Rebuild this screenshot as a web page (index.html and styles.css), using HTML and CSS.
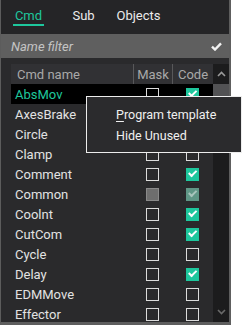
FILE: index.html
```html
<!DOCTYPE html>
<html lang="en">
<head>
    <meta charset="UTF-8">
    <title>Commands</title>
    <link rel="stylesheet" href="styles.css">
</head>
<body>

<div class="panel">
    <div class="tabs">
        <div class="tab active"><span>Cmd</span></div>
        <div class="tab"><span>Sub</span></div>
        <div class="tab"><span>Objects</span></div>
    </div>

    <div class="filter">
        <span class="filter-text">Name filter</span>
        <svg class="filter-check" width="11" height="9" viewBox="0 0 11 9">
            <path d="M1 4.6 L4 7.5 L10 1.3" fill="none" stroke="#f2f2f2" stroke-width="2.4"/>
        </svg>
    </div>

    <div class="table-wrap">
        <div class="table">
            <div class="row head">
                <div class="col-name">Cmd name</div>
                <div class="col-mask">Mask</div>
                <div class="col-code">Code</div>
            </div>
            <div class="row selected">
                <div class="col-name">AbsMov</div>
                <div class="col-mask"><span class="box"></span></div>
                <div class="col-code"><span class="box on"></span></div>
            </div>
            <div class="row">
                <div class="col-name">AxesBrake</div>
                <div class="col-mask"><span class="box"></span></div>
                <div class="col-code"><span class="box"></span></div>
            </div>
            <div class="row">
                <div class="col-name">Circle</div>
                <div class="col-mask"><span class="box"></span></div>
                <div class="col-code"><span class="box"></span></div>
            </div>
            <div class="row">
                <div class="col-name">Clamp</div>
                <div class="col-mask"><span class="box"></span></div>
                <div class="col-code"><span class="box"></span></div>
            </div>
            <div class="row">
                <div class="col-name">Comment</div>
                <div class="col-mask"><span class="box"></span></div>
                <div class="col-code"><span class="box on"></span></div>
            </div>
            <div class="row">
                <div class="col-name">Common</div>
                <div class="col-mask"><span class="box disabled"></span></div>
                <div class="col-code"><span class="box on disabled"></span></div>
            </div>
            <div class="row">
                <div class="col-name">Coolnt</div>
                <div class="col-mask"><span class="box"></span></div>
                <div class="col-code"><span class="box on"></span></div>
            </div>
            <div class="row">
                <div class="col-name">CutCom</div>
                <div class="col-mask"><span class="box"></span></div>
                <div class="col-code"><span class="box on"></span></div>
            </div>
            <div class="row">
                <div class="col-name">Cycle</div>
                <div class="col-mask"><span class="box"></span></div>
                <div class="col-code"><span class="box"></span></div>
            </div>
            <div class="row">
                <div class="col-name">Delay</div>
                <div class="col-mask"><span class="box"></span></div>
                <div class="col-code"><span class="box on"></span></div>
            </div>
            <div class="row">
                <div class="col-name">EDMMove</div>
                <div class="col-mask"><span class="box"></span></div>
                <div class="col-code"><span class="box"></span></div>
            </div>
            <div class="row">
                <div class="col-name">Effector</div>
                <div class="col-mask"><span class="box"></span></div>
                <div class="col-code"><span class="box"></span></div>
            </div>
        </div>

        <div class="scrollbar">
            <div class="scroll-btn">
                <svg width="9" height="6" viewBox="0 0 9 6"><path d="M1 5 L4.5 1.5 L8 5" fill="none" stroke="#9a9a9a" stroke-width="1.6"/></svg>
            </div>
            <div class="scroll-thumb"></div>
            <div class="scroll-track"></div>
            <div class="scroll-btn">
                <svg width="9" height="6" viewBox="0 0 9 6"><path d="M1 1 L4.5 4.5 L8 1" fill="none" stroke="#6a6a6a" stroke-width="1.6"/></svg>
            </div>
        </div>
    </div>

    <div class="menu">
        <div class="menu-item"><u>P</u>rogram template</div>
        <div class="menu-item">Hide Unused</div>
    </div>
</div>

</body>
</html>
```

FILE: styles.css
```css
body {
    margin: 0;
    background: #fff;
    font-family: Roboto, "Liberation Sans", sans-serif;
}
.panel {
    position: relative;
    box-sizing: border-box;
    width: 231px;
    height: 325px;
    background: #2a2a2c;
    border-left: 1px solid #5c5c5c;
    border-right: 2px solid #5e5e5e;
    border-bottom: 3px solid #5e5e5e;
    display: flex;
    flex-direction: column;
    overflow: visible;
}
.tabs {
    height: 34px;
    flex: none;
    display: flex;
    background: #252527;
}
.tab {
    width: 55px;
    text-align: center;
    font-size: 13px;
    color: #ececec;
    padding-top: 8px;
    box-sizing: border-box;
}
.tab span {
    display: inline-block;
    padding: 0 2px 1px;
    line-height: 15px;
    border-bottom: 2px solid transparent;
}
.tab.active span {
    color: #1ec79d;
    border-bottom-color: #1ec79d;
}
.filter {
    height: 24px;
    flex: none;
    background: #5f5f5f;
    display: flex;
    align-items: center;
    justify-content: space-between;
    padding: 0 7px 0 10px;
}
.filter-text {
    font-size: 13px;
    font-style: italic;
    color: #c4c4c4;
}
.table-wrap {
    flex: 1;
    display: flex;
    margin: 6px 0 0 10px;
    overflow: hidden;
}
.table {
    width: 202px;
}
.row {
    display: grid;
    grid-template-columns: 122px 39px 41px;
    height: 20px;
    align-items: center;
    font-size: 13px;
    color: #e2e2e2;
}
.row.head {
    background: #313134;
    color: #a9a9a9;
    align-items: stretch;
}
.row.head > div {
    display: flex;
    align-items: center;
}
.row.head .col-name {
    padding-left: 6px;
}
.row.head .col-mask,
.row.head .col-code {
    border-left: 1px solid #58585a;
    justify-content: center;
}
.row .col-name {
    padding-left: 4px;
}
.row.selected {
    background: #000;
    color: #1ec79d;
}
.col-mask,
.col-code {
    display: flex;
    justify-content: center;
}
.box {
    box-sizing: border-box;
    width: 13px;
    height: 13px;
    border: 1px solid #dcdcdc;
    display: block;
}
.box.on {
    border: none;
    background: #1ec79d;
    position: relative;
}
.box.on::after {
    content: "";
    position: absolute;
    left: 3px;
    top: 2px;
    width: 6px;
    height: 3px;
    border-left: 2px solid #fff;
    border-bottom: 2px solid #fff;
    transform: rotate(-45deg);
    transform-origin: 4px 3px;
}
.box.disabled {
    background: #6e6e6e;
    border-color: #8a8a8a;
}
.box.on.disabled {
    background: #5f9686;
    border: none;
}
.box.on.disabled::after {
    border-color: #a8c4bc;
}
.scrollbar {
    width: 16px;
    display: flex;
    flex-direction: column;
    background: #1c1c1d;
}
.scroll-btn {
    height: 20px;
    flex: none;
    display: flex;
    align-items: center;
    justify-content: center;
}
.scroll-thumb {
    height: 38px;
    flex: none;
    background: #525254;
}
.scroll-track {
    flex: 1;
}
.menu {
    position: absolute;
    left: 85px;
    top: 96px;
    width: 156px;
    height: 57px;
    box-sizing: border-box;
    background: #2b2b2d;
    border: 1px solid #ededed;
    padding: 7px 0 0 29px;
}
.menu-item {
    font-size: 12.5px;
    line-height: 21px;
    color: #f0f0f0;
}
.menu-item u {
    text-underline-offset: 2px;
}
```
